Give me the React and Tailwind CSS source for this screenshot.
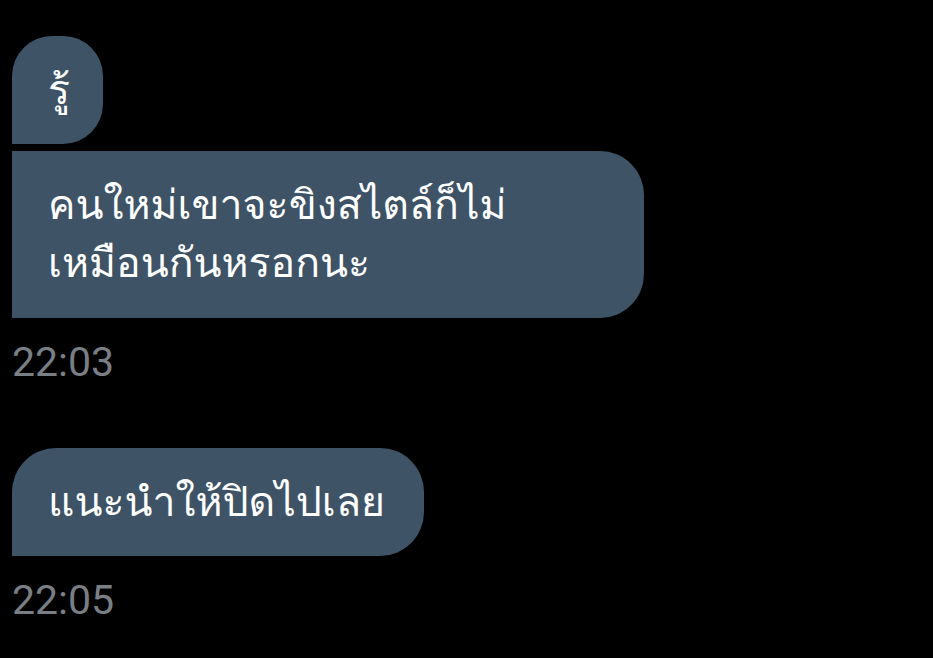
import React from "react";

// chat bubble; bottom-left corner stays square like the reference
const Bubble = ({ children, className = "" }) => (
  <div
    className={`self-start bg-[#3e5366] text-white text-[41px] leading-[58px] px-9 pt-[25px] font-['Loma','Noto_Sans_Thai_Looped',sans-serif] ${className}`}
  >
    {children}
  </div>
);

const Stamp = ({ time, className = "" }) => (
  <div className={`text-[41px] leading-[48px] text-[#7a7f85] font-['Roboto',sans-serif] ${className}`}>
    {time}
  </div>
);

export default function App() {
  return (
    <div className="w-[933px] h-[658px] bg-black overflow-hidden pl-3 pt-9 flex flex-col">
      <Bubble className="w-[91px] pb-[25px] rounded-tl-[40px] rounded-tr-[40px] rounded-br-[40px]">รู้</Bubble>
      <Bubble className="mt-[7px] w-[632px] pb-[26px] rounded-tr-[44px] rounded-br-[44px]">
        คนใหม่เขาจะขิงสไตล์ก็ไม่
        <br />
        เหมือนกันหรอกนะ
      </Bubble>
      <Stamp time="22:03" className="mt-5" />
      <Bubble className="mt-[62px] w-[412px] pb-[25px] rounded-tl-[44px] rounded-tr-[44px] rounded-br-[44px]">
        แนะนำให้ปิดไปเลย
      </Bubble>
      <Stamp time="22:05" className="mt-5" />
    </div>
  );
}
